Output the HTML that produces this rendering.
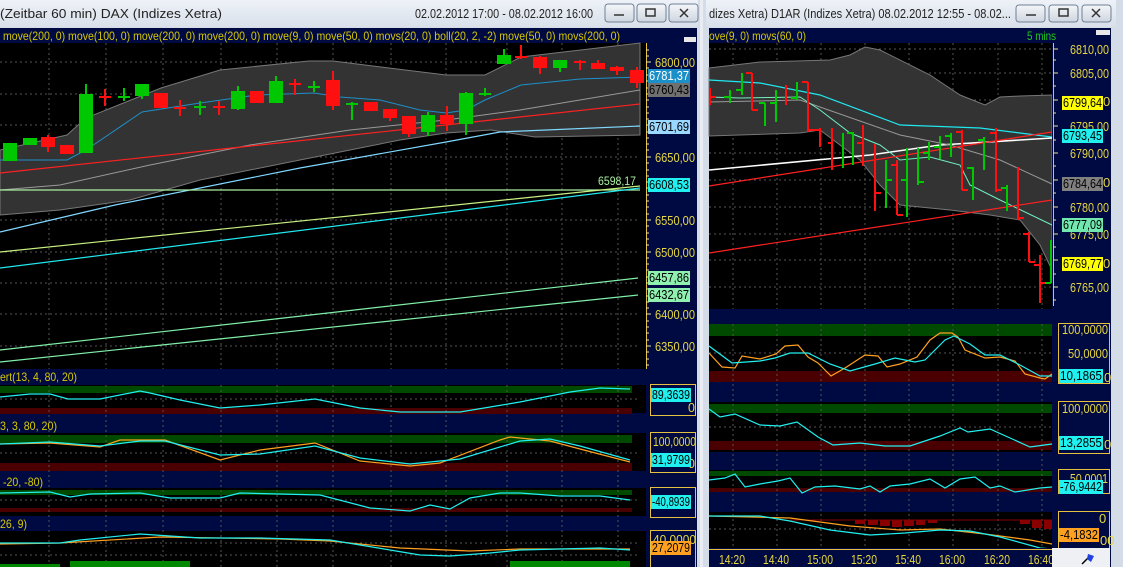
<!DOCTYPE html>
<html><head><meta charset="utf-8"><style>
html,body{margin:0;padding:0;background:#e9edf3;width:1123px;height:567px;overflow:hidden}
svg{display:block}
text{font-family:"Liberation Sans Narrow","Liberation Sans",sans-serif}
</style></head><body>
<svg width="1123" height="567" viewBox="0 0 1123 567" xmlns="http://www.w3.org/2000/svg">
<defs>
<linearGradient id="tb" x1="0" y1="0" x2="0" y2="1"><stop offset="0" stop-color="#eef2f8"/><stop offset="1" stop-color="#d9e0ea"/></linearGradient>
<linearGradient id="bt" x1="0" y1="0" x2="0" y2="1"><stop offset="0" stop-color="#f4f6f9"/><stop offset="1" stop-color="#cfd6e0"/></linearGradient>
</defs>
<rect x="0" y="0" width="700" height="567" fill="#d4dce8"/>
<rect x="703" y="0" width="420" height="567" fill="#d4dce8"/>
<rect x="0" y="0" width="698" height="27" fill="url(#tb)"/>
<rect x="706" y="0" width="410" height="27" fill="url(#tb)"/>
<text x="0" y="18" font-size="13" fill="#222" textLength="222" lengthAdjust="spacingAndGlyphs">(Zeitbar 60 min)  DAX (Indizes Xetra)</text>
<text x="415" y="18" font-size="13" fill="#222" textLength="178" lengthAdjust="spacingAndGlyphs">02.02.2012 17:00 - 08.02.2012 16:00</text>
<text x="709" y="18" font-size="13" fill="#222" textLength="302" lengthAdjust="spacingAndGlyphs">dizes Xetra) D1AR (Indizes Xetra) 08.02.2012 12:55 - 08.02...</text>
<g stroke="#6f7f96" fill="url(#bt)">
<rect x="605" y="4" width="29" height="18" rx="3"/><rect x="637" y="4" width="29" height="18" rx="3"/><rect x="669" y="4" width="29" height="18" rx="3"/>
<rect x="1016" y="5" width="29" height="17" rx="3"/><rect x="1049" y="5" width="29" height="17" rx="3"/><rect x="1082" y="5" width="29" height="17" rx="3"/>
</g>
<g stroke="#333" fill="none" stroke-width="1.5">
<path d="M614 15h10"/><rect x="646" y="9" width="9" height="7"/><path d="M680 9l8 8M688 9l-8 8"/>
<path d="M1026 15h10"/><rect x="1059" y="9" width="9" height="7"/><path d="M1092 9l8 8M1100 9l-8 8"/>
</g>

<!-- LEFT WINDOW -->
<rect x="0" y="28" width="697" height="539" fill="#000a42"/>
<text x="3" y="40" font-size="12" fill="#d7c800" textLength="617" lengthAdjust="spacingAndGlyphs">move(200, 0) move(100, 0) move(200, 0) move(200, 0) move(9, 0) move(50, 0) movs(20, 0) boll(20, 2, -2) move(50, 0) movs(200, 0)</text>
<rect x="684" y="37" width="12" height="5" fill="#e8e8e8"/>
<rect x="0" y="43" width="646" height="326" fill="#000"/>
<rect x="0" y="385" width="646" height="28" fill="#000"/>
<rect x="0" y="433" width="646" height="38" fill="#000"/>
<rect x="0" y="488" width="646" height="28" fill="#000"/>
<rect x="0" y="531" width="646" height="36" fill="#000"/>
<rect x="0" y="386" width="632" height="7" fill="#004a00"/><rect x="0" y="408" width="632" height="6" fill="#4a0000"/>
<rect x="0" y="435" width="632" height="8" fill="#004a00"/><rect x="0" y="463" width="632" height="8" fill="#4a0000"/>
<rect x="0" y="490" width="632" height="5" fill="#004a00"/><rect x="0" y="508" width="632" height="4" fill="#4a0000"/>
<g stroke="#555" stroke-dasharray="2,3" stroke-width="1">
<path d="M49 43V369M106 43V369M163 43V369M221 43V369M277 43V369M333 43V369M391 43V369M446 43V369M507 43V369M562 43V369M618 43V369"/>
<path d="M0 62H640M0 94H640M0 125H640M0 157H640M0 220H640M0 252H640M0 283H640M0 314H640M0 346H640"/>
<path d="M49 385V567M106 385V567M163 385V567M221 385V567M277 385V567M333 385V567M391 385V567M446 385V567M507 385V567M562 385V567M618 385V567"/>
<path d="M0 399H640M0 453H640M0 500H640M0 543H640M0 555H640"/>
</g>
<path d="M0 150L67 135L86 118L161 88L220 70L309 61L333 61L446 75L485 75L521 57L640 43L640 135L535 137L491 130L446 133L400 140L300 160L200 180L130 200L60 210L0 215Z" fill="#333" stroke="#777" stroke-width="1"/>
<polyline fill="none" stroke="#1e90c8" stroke-width="1" points="0,160 67,160 86,150 142,112 200,103 257,95 314,93 340,97 380,100 420,110 446,113 466,110 485,100 521,85 580,79 640,77"/>
<polyline fill="none" stroke="#999" stroke-width="1" points="0,190 60,185 150,165 250,145 350,130 446,120 520,110 640,90"/>
<polyline fill="none" stroke="#ff2020" stroke-width="1.2" points="0,173 640,104"/>
<polyline fill="none" stroke="#80d8ff" stroke-width="1.2" points="0,232 115,205 300,168 446,142 500,132 640,126"/>
<path d="M0 190H640" stroke="#a8f0a0" stroke-width="1.2"/>
<polyline fill="none" stroke="#c8f080" stroke-width="1.2" points="0,252 640,186"/>
<polyline fill="none" stroke="#20e8f0" stroke-width="1.2" points="0,268 640,188"/>
<polyline fill="none" stroke="#80f0a8" stroke-width="1.2" points="0,350 638,278"/>
<polyline fill="none" stroke="#80f0a8" stroke-width="1.2" points="0,362 638,295"/>
<g stroke-width="2">
<g stroke="#00c800" fill="#00c800">
<rect x="4" y="144" width="12" height="16"/><rect x="24" y="139" width="12" height="5"/>
<path d="M86 84V152"/><rect x="80" y="95" width="12" height="57"/>
<path d="M124 88V101M118 97H130"/><path d="M142 84V99"/><rect x="136" y="85" width="12" height="10"/>
<path d="M200 101V115M194 107H206"/><path d="M238 86V110"/><rect x="232" y="92" width="12" height="16"/>
<path d="M276 76V102"/><rect x="270" y="82" width="12" height="20"/><path d="M314 81V92M308 87H320"/>
<path d="M352 102V120M346 104H358"/><path d="M428 112V136"/><rect x="422" y="116" width="12" height="15"/>
<path d="M466 92V135"/><rect x="460" y="94" width="12" height="29"/><path d="M485 88V96M479 94H491"/>
<path d="M504 49V64"/><rect x="498" y="56" width="12" height="7"/><path d="M560 60V72"/><rect x="554" y="61" width="12" height="6"/>
</g>
<g stroke="#ff1010" fill="#ff1010">
<path d="M48 135V152"/><rect x="42" y="138" width="12" height="8"/><rect x="61" y="146" width="12" height="7"/>
<path d="M105 89V106M99 97H111"/><rect x="155" y="94" width="12" height="13"/><path d="M180 100V116M174 108H186"/>
<path d="M219 101V115M213 107H225"/><rect x="251" y="92" width="12" height="10"/><path d="M295 79V95M289 84H301"/>
<path d="M333 71V110"/><rect x="327" y="81" width="12" height="24"/><rect x="365" y="103" width="12" height="7"/>
<path d="M390 110V121"/><rect x="384" y="110" width="12" height="7"/><path d="M409 117V137"/><rect x="403" y="117" width="12" height="16"/>
<path d="M447 106V131"/><rect x="441" y="116" width="12" height="7"/><path d="M521 45V59M515 57H527"/>
<path d="M540 56V74"/><rect x="534" y="58" width="12" height="9"/><path d="M580 60V70M574 62H586"/>
<path d="M598 60V69"/><rect x="592" y="64" width="12" height="4"/><path d="M617 66V75"/><rect x="611" y="68" width="12" height="2"/>
<path d="M637 67V88"/><rect x="631" y="71" width="12" height="11"/>
</g></g>
<text x="598" y="185" font-size="12" fill="#a8f0a0" textLength="38" lengthAdjust="spacingAndGlyphs">6598,17</text>
<rect x="646" y="43" width="51" height="326" fill="#000a42"/>
<path d="M646.5 43V369" stroke="#e8c040"/>
<g stroke="#e8e0a0"><path d="M646 50h3M646 56h3M646 62h5M646 68h3M646 75h3M646 81h3M646 88h3M646 94h5M646 100h3M646 107h3M646 113h3M646 119h3M646 125h5M646 132h3M646 138h3M646 144h3M646 150h3M646 157h5M646 163h3M646 170h3M646 176h3M646 182h3M646 188h5M646 195h3M646 201h3M646 207h3M646 214h3M646 220h5M646 226h3M646 233h3M646 239h3M646 245h3M646 252h5M646 258h3M646 264h3M646 270h3M646 277h3M646 283h5M646 289h3M646 296h3M646 302h3M646 308h3M646 314h5M646 321h3M646 327h3M646 333h3M646 340h3M646 346h5M646 352h3M646 359h3M646 365h3"/></g>
<g font-size="13" fill="#e8d840" lengthAdjust="spacingAndGlyphs">
<text x="655" y="67" textLength="40" lengthAdjust="spacingAndGlyphs">6800,00</text><text x="655" y="162" textLength="40" lengthAdjust="spacingAndGlyphs">6650,00</text><text x="655" y="225" textLength="40" lengthAdjust="spacingAndGlyphs">6550,00</text><text x="655" y="257" textLength="40" lengthAdjust="spacingAndGlyphs">6500,00</text><text x="655" y="319" textLength="40" lengthAdjust="spacingAndGlyphs">6400,00</text><text x="655" y="351" textLength="40" lengthAdjust="spacingAndGlyphs">6350,00</text>
</g>
<rect x="648" y="69" width="42" height="14" fill="#1a8fc8"/><text x="649" y="80" font-size="12.5" fill="#fff" textLength="40" lengthAdjust="spacingAndGlyphs">6781,37</text>
<rect x="648" y="83" width="42" height="14" fill="#707070"/><text x="649" y="94" font-size="12.5" fill="#000" textLength="40" lengthAdjust="spacingAndGlyphs">6760,43</text>
<rect x="648" y="120" width="42" height="14" fill="#9ad8ff"/><text x="649" y="131" font-size="12.5" fill="#000" textLength="40" lengthAdjust="spacingAndGlyphs">6701,69</text>
<rect x="648" y="178" width="42" height="14" fill="#20f0f0"/><text x="649" y="189" font-size="12.5" fill="#000" textLength="40" lengthAdjust="spacingAndGlyphs">6608,53</text>
<rect x="648" y="271" width="42" height="14" fill="#90f0b0"/><text x="649" y="282" font-size="12.5" fill="#000" textLength="40" lengthAdjust="spacingAndGlyphs">6457,86</text>
<rect x="648" y="288" width="42" height="14" fill="#90f0b0"/><text x="649" y="299" font-size="12.5" fill="#000" textLength="40" lengthAdjust="spacingAndGlyphs">6432,67</text>
<g font-size="12" fill="#d7c800">
<text x="0" y="381" textLength="77" lengthAdjust="spacingAndGlyphs">ert(13, 4, 80, 20)</text><text x="0" y="430" textLength="57" lengthAdjust="spacingAndGlyphs">3, 3, 80, 20)</text><text x="3" y="486" textLength="40" lengthAdjust="spacingAndGlyphs">-20, -80)</text><text x="0" y="528" textLength="27" lengthAdjust="spacingAndGlyphs">26, 9)</text>
</g>
<polyline fill="none" stroke="#20f0f0" stroke-width="1.2" points="0,397 30,394 50,394 68,399 100,399 140,391 150,393 180,400 220,408 260,405 315,399 360,408 400,412 460,412 520,402 570,392 600,388 630,389"/>
<polyline fill="none" stroke="#ffa020" stroke-width="1.2" points="0,444 50,443 100,447 120,440 165,440 220,460 260,450 315,443 360,461 410,466 440,463 500,440 510,437 550,441 580,449 630,462"/>
<polyline fill="none" stroke="#20f0f0" stroke-width="1.2" points="0,444 50,442 100,446 140,441 165,441 220,455 260,454 315,446 360,458 410,464 460,459 520,441 550,439 580,446 630,460"/>
<polyline fill="none" stroke="#20f0f0" stroke-width="1.2" points="0,493 50,492 70,497 90,494 140,493 170,498 220,498 240,493 320,495 370,508 410,511 430,505 450,509 470,498 500,493 520,493 560,496 600,496 630,500"/>
<g fill="#008800"><rect x="70" y="561" width="120" height="6"/><rect x="510" y="561" width="120" height="6"/><rect x="0" y="564" width="60" height="3"/></g>
<polyline fill="none" stroke="#ffa020" stroke-width="1.2" points="0,544 60,543 160,537 280,539 330,541 400,548 470,551 520,549 630,549"/>
<polyline fill="none" stroke="#20f0f0" stroke-width="1.2" points="0,543 60,543 80,540 140,534 200,538 260,538 330,540 360,545 420,555 450,556 490,553 520,550 600,548 630,550"/>
<g fill="#000a42" stroke="#e8c040"><rect x="650.5" y="384.5" width="45" height="31"/><rect x="650.5" y="432.5" width="45" height="40"/><rect x="650.5" y="487.5" width="45" height="30"/><rect x="650.5" y="530.5" width="45" height="38"/></g>
<g font-size="12.5" fill="#e8d840"><text x="688" y="412">0</text><text x="653" y="446" textLength="43" lengthAdjust="spacingAndGlyphs">100,0000</text><text x="688" y="468">0</text><text x="653" y="544" textLength="43" lengthAdjust="spacingAndGlyphs">40,0000</text></g>
<rect x="651" y="388" width="40" height="14" fill="#20f0f0"/><text x="652" y="399" font-size="12.5" fill="#000" textLength="38" lengthAdjust="spacingAndGlyphs">89,3639</text>
<rect x="651" y="453" width="40" height="14" fill="#20f0f0"/><text x="652" y="464" font-size="12.5" fill="#000" textLength="38" lengthAdjust="spacingAndGlyphs">31,9799</text>
<rect x="651" y="495" width="40" height="14" fill="#20f0f0"/><text x="652" y="506" font-size="12.5" fill="#000" textLength="38" lengthAdjust="spacingAndGlyphs">-40,8939</text>
<rect x="651" y="541" width="40" height="14" fill="#ffa020"/><text x="652" y="552" font-size="12.5" fill="#000" textLength="38" lengthAdjust="spacingAndGlyphs">27,2079</text>

<!-- RIGHT WINDOW -->
<rect x="709" y="28" width="402" height="539" fill="#000a42"/>
<text x="709" y="40" font-size="12" fill="#d7c800" textLength="97" lengthAdjust="spacingAndGlyphs">ove(9, 0) movs(60, 0)</text>
<text x="1027" y="40" font-size="12" fill="#20c820" textLength="29" lengthAdjust="spacingAndGlyphs">5 mins</text>
<rect x="1096" y="30" width="14" height="5" fill="#e8e8e8"/>
<rect x="709" y="43" width="343" height="266" fill="#000"/>
<rect x="709" y="324" width="343" height="58" fill="#000"/>
<rect x="709" y="402" width="343" height="50" fill="#000"/>
<rect x="709" y="470" width="343" height="22" fill="#000"/>
<rect x="709" y="512" width="343" height="36" fill="#000"/>
<rect x="709" y="324" width="343" height="12" fill="#004a00"/><rect x="709" y="371" width="343" height="11" fill="#4a0000"/>
<rect x="709" y="404" width="343" height="9" fill="#004a00"/><rect x="709" y="441" width="343" height="9" fill="#4a0000"/>
<rect x="709" y="471" width="343" height="5" fill="#004a00"/><rect x="709" y="488" width="343" height="4" fill="#4a0000"/>
<g stroke="#555" stroke-dasharray="2,3">
<path d="M733 43V309M777 43V309M821 43V309M865 43V309M909 43V309M953 43V309M998 43V309M1042 43V309"/>
<path d="M709 49H1052M709 73H1052M709 100H1052M709 126H1052M709 153H1052M709 180H1052M709 207H1052M709 234H1052M709 260H1052M709 287H1052"/>
<path d="M733 324V548M777 324V548M821 324V548M865 324V548M909 324V548M953 324V548M998 324V548M1042 324V548"/>
<path d="M709 353H1052M709 427H1052M709 529H1052"/>
</g>
<path d="M709 68L760 62L830 60L850 55L865 47L880 50L930 75L960 95L985 105L1000 97L1020 96L1052 95L1052 270L1040 245L1020 220L990 215L950 210L900 205L880 185L860 160L820 130L800 133L709 136Z" fill="#333" stroke="#777"/>
<polyline fill="none" stroke="#20e8f0" stroke-width="1.2" points="709,80 760,83 820,95 900,125 980,128 1052,137"/>
<polyline fill="none" stroke="#fff" stroke-width="1.5" points="709,170 870,155 940,145 1052,138"/>
<polyline fill="none" stroke="#999" stroke-width="1" points="709,102 800,100 900,135 950,145 1000,160 1052,184"/>
<polyline fill="none" stroke="#70f0c0" stroke-width="1" points="709,97 740,98 800,97 820,110 850,133 880,145 900,160 930,157 960,165 970,185 1000,200 1052,225"/>
<polyline fill="none" stroke="#ff2020" stroke-width="1.2" points="709,186 1052,132"/>
<polyline fill="none" stroke="#ff2020" stroke-width="1.2" points="709,253 1052,200"/>
<g stroke-width="2" fill="none">
<g stroke="#ff1010"><path d="M710 88V105M710 97h6M752 73V110M746 73h6M752 110h6M786 85V105M808 82V132M802 82h6M808 130h6M820 128V147M814 130h6M832 128V170M828 143h5M863 125V166M857 143h6M875 144V211M875 193h6M897 160V215M891 165h6M897 215h6M962 130V190M956 132h6M962 190h6M996 128V192M990 133h6M996 190h6M1018 167V220M1018 218h6M1029 232V262M1023 234h6M1029 262h6M1040 255V303M1034 265h6M1040 283h6"/></g>
<g stroke="#00c800"><path d="M730 90V103M724 97h6M742 73V95M736 90h6M765 103V126M759 103h6M776 90V122M770 103h6M797 82V100M791 98h6M843 133V168M853 132V165M847 133h6M886 160V208M886 180h6M907 148V217M901 180h6M918 148V185M918 182h6M929 142V160M923 153h6M940 136V159M934 147h6M951 133V157M945 136h6M973 167V200M967 168h6M984 137V170M978 140h6M1007 185V211M1001 188h6M1051 240V283M1045 283h6"/></g>
</g>
<rect x="1052" y="43" width="58" height="266" fill="#000a42"/>
<path d="M1053.5 43V306" stroke="#e8c040"/>
<g stroke="#e8e0a0"><path d="M1053 49h5M1053 60h3M1053 73h5M1053 86h3M1053 100h5M1053 113h3M1053 126h5M1053 140h3M1053 153h5M1053 166h3M1053 180h5M1053 193h3M1053 207h5M1053 220h3M1053 234h5M1053 247h3M1053 260h5M1053 274h3M1053 287h5M1053 300h3"/></g>
<g font-size="13" fill="#e8d840"><text x="1070" y="54" textLength="39" lengthAdjust="spacingAndGlyphs">6810,00</text><text x="1070" y="78" textLength="39" lengthAdjust="spacingAndGlyphs">6805,00</text><text x="1070" y="131" textLength="39" lengthAdjust="spacingAndGlyphs">6795,00</text><text x="1070" y="158" textLength="39" lengthAdjust="spacingAndGlyphs">6790,00</text><text x="1070" y="212" textLength="39" lengthAdjust="spacingAndGlyphs">6780,00</text><text x="1070" y="239" textLength="39" lengthAdjust="spacingAndGlyphs">6775,00</text><text x="1070" y="292" textLength="39" lengthAdjust="spacingAndGlyphs">6765,00</text><text x="1103" y="106">0</text><text x="1103" y="187">0</text><text x="1103" y="268">0</text></g>
<rect x="1062" y="96" width="41" height="14" fill="#ffff00"/><text x="1063" y="107" font-size="12.5" fill="#000" textLength="39" lengthAdjust="spacingAndGlyphs">6799,64</text>
<rect x="1062" y="129" width="41" height="14" fill="#20f0f0"/><text x="1063" y="140" font-size="12.5" fill="#000" textLength="39" lengthAdjust="spacingAndGlyphs">6793,45</text>
<rect x="1062" y="177" width="41" height="14" fill="#808080"/><text x="1063" y="188" font-size="12.5" fill="#000" textLength="39" lengthAdjust="spacingAndGlyphs">6784,64</text>
<rect x="1062" y="218" width="41" height="14" fill="#70e8b0"/><text x="1063" y="229" font-size="12.5" fill="#000" textLength="39" lengthAdjust="spacingAndGlyphs">6777,09</text>
<rect x="1062" y="257" width="41" height="14" fill="#ffff00"/><text x="1063" y="268" font-size="12.5" fill="#000" textLength="39" lengthAdjust="spacingAndGlyphs">6769,77</text>
<polyline fill="none" stroke="#ffa020" stroke-width="1.2" points="709,353 722,367 735,368 742,356 760,359 776,354 785,346 798,345 808,357 818,363 831,376 845,368 865,355 878,356 887,367 900,364 917,357 930,340 940,333 952,333 958,337 965,350 985,358 1000,357 1015,361 1025,374 1040,378 1045,379 1052,374"/>
<polyline fill="none" stroke="#20f0f0" stroke-width="1.2" points="709,346 732,363 760,361 775,358 790,353 808,353 830,364 850,371 875,364 895,358 915,362 925,360 945,340 954,336 970,344 985,355 1000,355 1020,365 1040,376 1052,376"/>
<polyline fill="none" stroke="#20f0f0" stroke-width="1.2" points="709,409 720,417 735,414 760,425 780,426 797,422 818,437 833,445 860,443 885,446 910,446 940,436 960,428 968,432 990,429 1010,438 1030,447 1052,444"/>
<polyline fill="none" stroke="#20f0f0" stroke-width="1.2" points="709,480 725,478 735,474 745,487 760,484 778,481 790,478 802,493 815,487 835,486 860,489 870,486 880,492 890,486 910,484 930,479 945,488 960,479 975,477 990,488 1000,486 1015,492 1040,488 1052,487"/>
<g fill="#8a0000"><rect x="855" y="520" width="10" height="4"/><rect x="868" y="520" width="10" height="5"/><rect x="880" y="520" width="10" height="6"/><rect x="892" y="520" width="10" height="7"/><rect x="904" y="520" width="10" height="6"/><rect x="916" y="520" width="9" height="5"/><rect x="928" y="520" width="9" height="3"/><rect x="1020" y="520" width="10" height="4"/><rect x="1032" y="520" width="10" height="8"/><rect x="1044" y="520" width="8" height="9"/></g>
<path d="M790 520H1052" stroke="#8a0000"/>
<polyline fill="none" stroke="#ffa020" stroke-width="1.2" points="709,516 790,518 850,526 900,530 940,529 985,534 1030,540 1052,544"/>
<polyline fill="none" stroke="#20f0f0" stroke-width="1.2" points="709,516 760,516 790,521 830,530 870,535 905,533 940,530 970,531 1000,537 1040,548 1052,549"/>
<g fill="#000a42" stroke="#e8c040"><rect x="1058.5" y="323.5" width="51" height="60"/><rect x="1058.5" y="401.5" width="51" height="52"/><rect x="1058.5" y="469.5" width="51" height="24"/><rect x="1058.5" y="511.5" width="51" height="38"/></g>
<g font-size="13" fill="#e8d840"><text x="1062" y="334" textLength="46" lengthAdjust="spacingAndGlyphs">100,0000</text><text x="1068" y="358" textLength="40" lengthAdjust="spacingAndGlyphs">50,0000</text><text x="1062" y="413" textLength="46" lengthAdjust="spacingAndGlyphs">100,0000</text><text x="1070" y="483" textLength="38" lengthAdjust="spacingAndGlyphs">50,0001</text><text x="1099" y="523">0</text><text x="1104" y="382">0</text><text x="1104" y="449">0</text><text x="1100" y="545">00</text></g>
<rect x="1059" y="369" width="44" height="14" fill="#20f0f0"/><text x="1060" y="380" font-size="12.5" fill="#000" textLength="42" lengthAdjust="spacingAndGlyphs">10,1865</text>
<rect x="1059" y="436" width="44" height="14" fill="#20f0f0"/><text x="1060" y="447" font-size="12.5" fill="#000" textLength="42" lengthAdjust="spacingAndGlyphs">13,2855</text>
<rect x="1059" y="480" width="44" height="14" fill="#20f0f0"/><text x="1060" y="491" font-size="12.5" fill="#000" textLength="42" lengthAdjust="spacingAndGlyphs">-76,9442</text>
<rect x="1059" y="528" width="40" height="14" fill="#ffa020"/><text x="1060" y="539" font-size="12.5" fill="#000" textLength="38" lengthAdjust="spacingAndGlyphs">-4,1832</text>
<rect x="709" y="548" width="343" height="19" fill="#000a42"/>
<path d="M709 549.5H1052" stroke="#e8c040"/>
<g font-size="13" fill="#e8d840"><text x="719" y="564" textLength="26" lengthAdjust="spacingAndGlyphs">14:20</text><text x="763" y="564" textLength="26" lengthAdjust="spacingAndGlyphs">14:40</text><text x="807" y="564" textLength="26" lengthAdjust="spacingAndGlyphs">15:00</text><text x="851" y="564" textLength="26" lengthAdjust="spacingAndGlyphs">15:20</text><text x="895" y="564" textLength="26" lengthAdjust="spacingAndGlyphs">15:40</text><text x="939" y="564" textLength="26" lengthAdjust="spacingAndGlyphs">16:00</text><text x="984" y="564" textLength="26" lengthAdjust="spacingAndGlyphs">16:20</text><text x="1028" y="564" textLength="26" lengthAdjust="spacingAndGlyphs">16:40</text></g>
<rect x="1052" y="548" width="58" height="19" fill="#eef0f4"/>
<path d="M1082 564l8-8" stroke="#000" stroke-width="1.5"/><path d="M1088 554l6 2-3 6-4-3z" fill="#2040e0"/>
</svg>
</body></html>
